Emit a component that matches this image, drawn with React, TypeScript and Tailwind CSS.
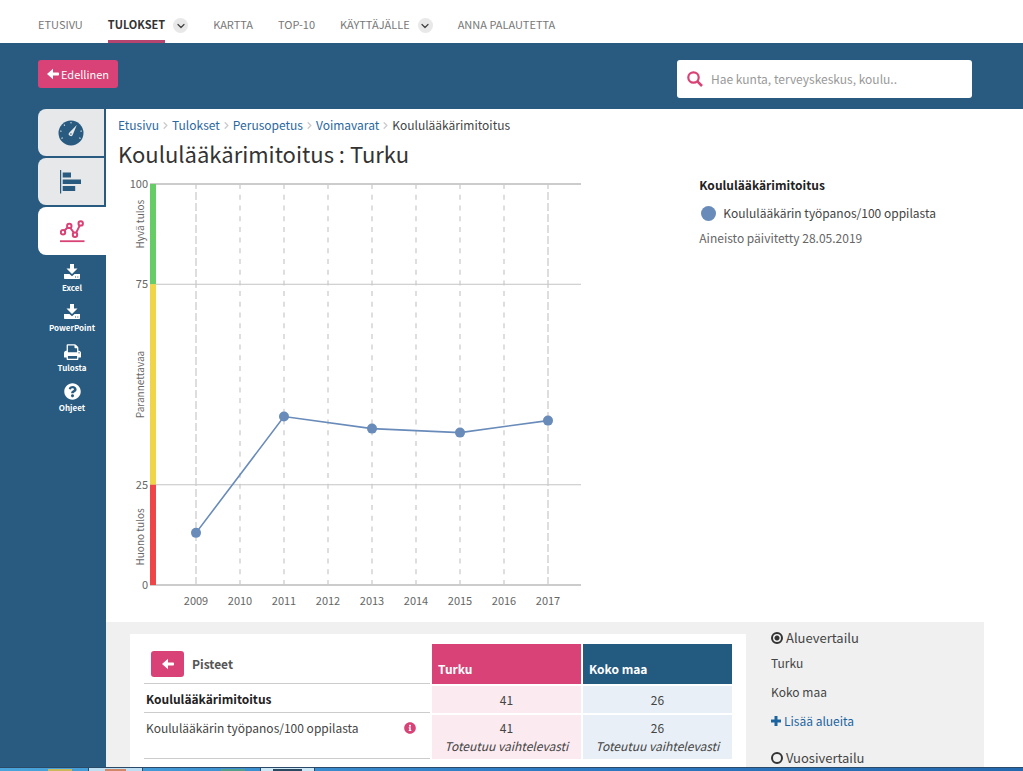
import { useState } from 'react';
import { FaInfoCircle, FaQuestionCircle } from 'react-icons/fa';
import { ChevronDown, ChevronRight } from 'lucide-react';
import { clsx } from 'clsx';

const NAV = [
  { label: 'ETUSIVU' },
  { label: 'TULOKSET', menu: true, active: true },
  { label: 'KARTTA' },
  { label: 'TOP-10' },
  { label: 'KÄYTTÄJÄLLE', menu: true },
  { label: 'ANNA PALAUTETTA' },
];

const CRUMBS = ['Etusivu', 'Tulokset', 'Perusopetus', 'Voimavarat'];

const YEARS = [2009, 2010, 2011, 2012, 2013, 2014, 2015, 2016, 2017];

const POINTS = [
  { year: 2009, value: 13 },
  { year: 2011, value: 42 },
  { year: 2013, value: 39 },
  { year: 2015, value: 38 },
  { year: 2017, value: 41 },
];

// labelAt is the score that the middle of the rotated label sits on
const BANDS = [
  { label: 'Hyvä tulos', from: 75, to: 100, labelAt: 90, color: '#66cc66' },
  { label: 'Parannettavaa', from: 25, to: 75, labelAt: 50, color: '#f0d548' },
  { label: 'Huono tulos', from: 0, to: 25, labelAt: 12, color: '#ee4549' },
];

function ArrowIcon({ className }: { className?: string }) {
  return (
    <svg viewBox="0 0 12 12" className={className} fill="currentColor" aria-hidden="true">
      <path d="M0 6 6 0.8V4.4H11.2Q12 4.4 12 5.2V6.8Q12 7.6 11.2 7.6H6V11.2Z" />
    </svg>
  );
}

function SearchIcon() {
  return (
    <svg viewBox="0 0 16 16" className="size-4 shrink-0 text-[#d84276]" fill="none" stroke="currentColor" aria-hidden="true">
      <circle cx="6.5" cy="6.5" r="5.2" strokeWidth="2.2" />
      <path d="M10.4 10.4 15 15" strokeWidth="2.6" />
    </svg>
  );
}

function SaveIcon() {
  return (
    <svg viewBox="0 0 18 17" className="h-[17px] w-[18px]" fill="currentColor" aria-hidden="true">
      <path d="M7 1h4v4.500h3.500L9 11 3.500 5.500H7Z" />
      <path fillRule="evenodd" d="M1 11h5.500L9 13.200 11.500 11H17v4.200q0 .8-.8.8H1.800Q1 16 1 15.200ZM12 13.500v1h1v-1ZM14.300 13.500v1h1v-1Z" />
    </svg>
  );
}

function PrintIcon() {
  return (
    <svg viewBox="0 0 1664 1664" className="size-[17px]" fill="currentColor" aria-hidden="true">
      <path d="M384 1536h896v-256h-896v256zM384 896h896v-384h-160q-40 0-68-28t-28-68v-160h-640v640zM1536 960q0-26-19-45t-45-19-45 19-19 45 19 45 45 19 45-19 19-45zM1664 960v416q0 13-9.500 22.500t-22.500 9.500h-224v160q0 40-28 68t-68 28h-960q-40 0-68-28t-28-68v-160h-224q-13 0-22.500-9.500t-9.500-22.500v-416q0-79 56.500-135.500t135.500-56.500h64v-544q0-40 28-68t68-28h672q40 0 88 20t76 48l152 152q28 28 48 76t20 88v256h64q79 0 135.500 56.500t56.500 135.500z" />
    </svg>
  );
}

function PlusIcon() {
  return (
    <svg viewBox="0 0 10 10" className="size-[10px]" fill="none" stroke="currentColor" strokeWidth="3" aria-hidden="true">
      <path d="M5 0v10M0 5h10" />
    </svg>
  );
}

function GaugeIcon() {
  const ticks = [-120, -80, -40, 0, 80, 120];
  return (
    <svg viewBox="0 0 26 26" className="size-[26px]" aria-hidden="true">
      <circle cx="13" cy="13" r="12.5" fill="#285b7f" />
      {ticks.map((angle) => (
        <path key={angle} d="M13 2v1.400" stroke="#e6e8ea" strokeWidth="1" transform={`rotate(${angle} 13 13)`} />
      ))}
      <path d="M18.800 5 14.900 14.600A2.100 2.100 0 1 1 11.400 12.500Z" fill="#e6e8ea" />
      <circle cx="12.900" cy="14" r="0.800" fill="#285b7f" />
    </svg>
  );
}

function BarsIcon() {
  return (
    <svg viewBox="0 0 22 24" className="h-6 w-[22px]" fill="#285b7f" aria-hidden="true">
      <path d="M0 0h1.200v23.500H0ZM2.700 2.500h8.300v5H2.700ZM2.700 9.500h18.300v4.500H2.700ZM2.700 16h12.500v5H2.700Z" />
    </svg>
  );
}

function LineIcon() {
  return (
    <svg viewBox="0 0 25 23" className="h-[23px] w-[25px]" fill="none" stroke="#d84276" strokeWidth="2" aria-hidden="true">
      <path d="M4.500 10.500 7.600 7.500M10.400 8 13.800 12.600M16.200 12.600 19.700 5.600" />
      <circle cx="3" cy="12.300" r="2.200" />
      <circle cx="9.300" cy="5.900" r="2.200" />
      <circle cx="15" cy="14.700" r="2.200" />
      <circle cx="20.700" cy="3.400" r="2.200" />
      <path d="M0 21.200h24.500" strokeWidth="1.800" />
    </svg>
  );
}

function TopNav() {
  return (
    <nav className="flex h-[43px] shrink-0 gap-[25px] bg-white pl-[38px] text-[11px] text-[#777]">
      {NAV.map((item) => (
        <div key={item.label} className="flex items-center gap-2">
          <a
            href="#"
            className={clsx(
              'flex h-full items-center border-b-3 pt-2 whitespace-nowrap',
              item.active ? 'border-[#b5446f] font-bold text-[#333]' : 'border-transparent'
            )}
          >
            {item.label}
          </a>
          {item.menu && (
            <button aria-label={`${item.label} valikko`} className="mt-2 flex size-[15px] items-center justify-center rounded-full bg-[#e8e8e8] text-[#444]">
              <ChevronDown size={12} strokeWidth={2.5} />
            </button>
          )}
        </div>
      ))}
    </nav>
  );
}

function SearchBar() {
  return (
    <div className="flex h-[66px] shrink-0 items-start justify-between bg-[#285b7f] pt-[17px] pr-[51px] pl-[38px]">
      <button className="flex h-7 w-20 items-center justify-center gap-[2px] rounded-[3px] bg-[#d84276] text-[11px] leading-4 text-white">
        <ArrowIcon className="size-3" />
        Edellinen
      </button>
      <label className="flex h-[38px] w-[295px] items-center gap-2 rounded-[3px] bg-white px-[10px]">
        <SearchIcon />
        <input
          type="search"
          aria-label="Haku"
          placeholder="Hae kunta, terveyskeskus, koulu.."
          className="min-w-0 flex-1 outline-none placeholder:text-[#999]"
        />
      </label>
    </div>
  );
}

function Sidebar() {
  const tools = [
    { label: 'Excel', icon: <SaveIcon /> },
    { label: 'PowerPoint', icon: <SaveIcon /> },
    { label: 'Tulosta', icon: <PrintIcon /> },
    { label: 'Ohjeet', icon: <FaQuestionCircle size={17} /> },
  ];
  return (
    <aside className="flex w-[106px] shrink-0 flex-col bg-[#285b7f] pl-[38px]">
      <div className="flex flex-col gap-[2px]">
        <button aria-label="Mittari" className="mr-[2px] flex h-[47px] items-center justify-center rounded-l-lg bg-[#e6e8ea]">
          <GaugeIcon />
        </button>
        <button aria-label="Palkit" className="mr-[2px] flex h-[47px] items-center justify-center rounded-l-lg bg-[#e6e8ea]">
          <BarsIcon />
        </button>
        <button aria-label="Aikasarja" className="flex h-12 items-center justify-center rounded-l-lg bg-white">
          <LineIcon />
        </button>
      </div>
      <div className="mt-2 flex flex-col gap-[10px]">
        {tools.map((tool) => (
          <button key={tool.label} className="flex h-[30px] flex-col items-center justify-between text-[8px] leading-[10px] font-bold text-white">
            {tool.icon}
            {tool.label}
          </button>
        ))}
      </div>
    </aside>
  );
}

const PLOT_LEFT = 32;
const PLOT_RIGHT = 463;
const PLOT_BOTTOM = 413;

function yearX(year: number) {
  return 78 + (year - 2009) * 44;
}

function valueY(value: number) {
  return PLOT_BOTTOM - value * 4.01;
}

function Chart() {
  return (
    <svg width="475" height="450" viewBox="0 0 475 450" className="text-[11px]" fill="#666" role="img" aria-label="Koululääkärimitoitus">
      {[0, 25, 75, 100].map((value) => (
        <g key={value}>
          <path
            d={`M${PLOT_LEFT} ${valueY(value)}H${PLOT_RIGHT}`}
            stroke={value % 100 === 0 ? '#bbb' : '#c4c4c4'}
            strokeWidth={value % 100 === 0 ? 1.5 : 1}
          />
          <text x={PLOT_LEFT - 2} y={valueY(value) + 4} textAnchor="end">{value}</text>
        </g>
      ))}
      {YEARS.map((year) => (
        <g key={year}>
          <path
            d={`M${yearX(year)} ${PLOT_BOTTOM}V${valueY(100)}`}
            stroke="#c8c8c8"
            strokeWidth="1.2"
            strokeDasharray={year === 2009 || year === 2017 ? '8 3' : '5 5.7'}
          />
          <text x={yearX(year)} y={PLOT_BOTTOM + 20} textAnchor="middle">{year}</text>
        </g>
      ))}
      {BANDS.map((band) => (
        <g key={band.label}>
          <rect x={PLOT_LEFT} y={valueY(band.to)} width="6" height={valueY(band.from) - valueY(band.to)} fill={band.color} />
          <text
            x="26"
            y={valueY(band.labelAt)}
            textAnchor="middle"
            transform={`rotate(-90 26 ${valueY(band.labelAt)})`}
            className="text-[10px]"
          >
            {band.label}
          </text>
        </g>
      ))}
      <polyline
        points={POINTS.map((p) => `${yearX(p.year)},${valueY(p.value)}`).join(' ')}
        fill="none"
        stroke="#688bba"
        strokeWidth="1.6"
      />
      {POINTS.map((p) => (
        <circle key={p.year} cx={yearX(p.year)} cy={valueY(p.value)} r="5" fill="#688bba" />
      ))}
    </svg>
  );
}

function ScoreTable() {
  return (
    <table className="w-full border-separate border-spacing-[2px] leading-[18px]">
      <thead>
        <tr className="h-10">
          <th className="border-b border-[#ccc] p-0 text-left text-[#555]">
            <div className="flex items-center gap-2 pl-[7px]">
              <button aria-label="Takaisin" className="flex h-[26px] w-[33px] items-center justify-center rounded-[3px] bg-[#d84276] text-white">
                <ArrowIcon className="size-3" />
              </button>
              Pisteet
            </div>
          </th>
          <th className="w-[149px] bg-[#d84276] px-[6px] pt-0 pb-[6px] text-left align-bottom text-white">Turku</th>
          <th className="w-[149px] bg-[#235a80] px-[6px] pt-0 pb-[6px] text-left align-bottom text-white">Koko maa</th>
        </tr>
      </thead>
      <tbody>
        <tr className="h-[27px] text-center">
          <th className="border-b border-[#ccc] px-[2px] py-0 text-left text-[#222]">Koululääkärimitoitus</th>
          <td className="bg-[#fbeaf0] p-0">41</td>
          <td className="bg-[#e8eff6] p-0">26</td>
        </tr>
        <tr className="h-11 text-center align-top">
          <th className="border-b border-[#ccc] px-[2px] py-1 text-left font-normal">
            <div className="flex items-center justify-between pr-3">
              Koululääkärin työpanos/100 oppilasta
              <FaInfoCircle size={12} className="text-[#d84276]" />
            </div>
          </th>
          <td className="bg-[#fbeaf0] px-0 pt-1 pb-[3px]">
            41
            <br />
            <em>Toteutuu vaihtelevasti</em>
          </td>
          <td className="bg-[#e8eff6] px-0 pt-1 pb-[3px]">
            26
            <br />
            <em>Toteutuu vaihtelevasti</em>
          </td>
        </tr>
      </tbody>
    </table>
  );
}

function CompareOption({ label, checked, onSelect }: { label: string; checked: boolean; onSelect: () => void }) {
  return (
    <label className="flex h-5 items-center gap-[3px] text-[13px]">
      <input
        type="radio"
        name="compare"
        checked={checked}
        onChange={onSelect}
        className="size-3 appearance-none rounded-full border-2 border-[#333] checked:bg-[radial-gradient(circle,#333_2px,transparent_3px)]"
      />
      {label}
    </label>
  );
}

function ComparePanel() {
  const [mode, setMode] = useState('area');
  return (
    <div className="w-[213px] shrink-0 pt-[6px]">
      <CompareOption label="Aluevertailu" checked={mode === 'area'} onSelect={() => setMode('area')} />
      <ul className="mt-[5px] mb-[17px] flex flex-col gap-[9px] leading-5">
        <li>Turku</li>
        <li>Koko maa</li>
        <li>
          <a href="#" className="flex items-center gap-[3px] text-[#1b64a0]">
            <PlusIcon />
            Lisää alueita
          </a>
        </li>
      </ul>
      <CompareOption label="Vuosivertailu" checked={mode === 'year'} onSelect={() => setMode('year')} />
    </div>
  );
}

function Taskbar() {
  return (
    <div className="flex h-1 shrink-0 border-t border-[#2a4a68] bg-linear-to-r from-[#4aa5dc] via-[#2f7cc4] to-[#2468ad]">
      <div className="w-[88px] pt-px pl-12">
        <div className="h-full w-6 bg-[#c9b95a]" />
      </div>
      <div className="w-[55px] border-x border-[#2a4a68] bg-[#bfe0f2] px-4 pt-px">
        <div className="h-full bg-[#d08868]" />
      </div>
      <div className="w-[117px] pt-px pl-[78px]">
        <div className="h-full w-6 bg-[#55a08a]" />
      </div>
      <div className="w-[55px] border-x border-[#2a4a68] bg-[#cfe8f5] px-3 pt-px">
        <div className="h-full bg-[#2b4a60]" />
      </div>
    </div>
  );
}

export default function App() {
  return (
    <div className="flex h-screen flex-col overflow-hidden bg-white font-['Noto_Sans_CJK_SC',sans-serif] text-[12px] text-[#444]">
      <TopNav />
      <SearchBar />
      <div className="flex min-h-0 flex-1 overflow-hidden">
        <Sidebar />
        <main className="flex min-w-0 flex-1 flex-col pr-[39px]">
          <header className="pt-[6px] pb-[3px] pl-3">
            <nav aria-label="Murupolku" className="flex items-center leading-5">
              {CRUMBS.map((crumb) => (
                <span key={crumb} className="flex items-center">
                  <a href="#" className="text-[#2a68a0]">{crumb}</a>
                  <ChevronRight size={11} strokeWidth={3} className="mx-px text-[#ccc]" />
                </span>
              ))}
              <span>Koululääkärimitoitus</span>
            </nav>
            <h1 className="mt-[2px] text-[22px] leading-8 text-[#333]">Koululääkärimitoitus : Turku</h1>
          </header>
          <section className="grid grid-cols-[2fr_1fr]">
            <div className="pl-3">
              <Chart />
            </div>
            <div className="pt-[3px] pl-2 leading-5">
              <h2 className="mb-2 font-bold text-[#222]">Koululääkärimitoitus</h2>
              <p className="mb-[5px] flex items-center gap-[7px] pl-[2px]">
                <span className="size-[15px] shrink-0 rounded-full bg-[#688bba]" />
                Koululääkärin työpanos/100 oppilasta
              </p>
              <p className="text-[#666]">Aineisto päivitetty 28.05.2019</p>
            </div>
          </section>
          <section className="flex flex-1 gap-[25px] bg-[#f0f0f0] pl-6">
            <div className="mt-3 flex-1 bg-white px-3 pt-2">
              <ScoreTable />
            </div>
            <ComparePanel />
          </section>
        </main>
      </div>
      <Taskbar />
    </div>
  );
}
